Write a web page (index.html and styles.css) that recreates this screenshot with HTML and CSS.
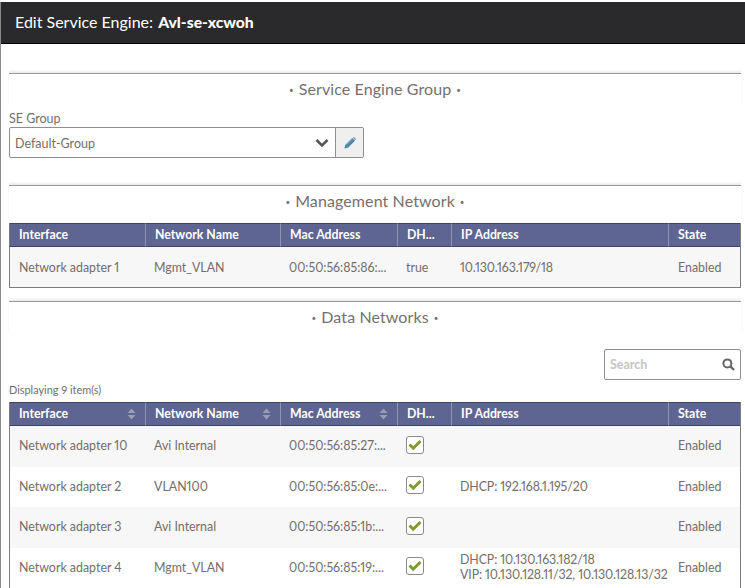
FILE: index.html
```html
<!DOCTYPE html>
<html lang="en">
<head>
    <meta charset="UTF-8">
    <title>Edit Service Engine</title>
    <link rel="stylesheet" href="styles.css">
</head>
<body>
<div class="modal">
    <div class="modal-head">Edit Service Engine: <b>Avl-se-xcwoh</b></div>

    <div class="modal-body">
        <div class="section-title first"><span class="dot">&bull;</span>Service Engine Group<span class="dot">&bull;</span></div>
        <label class="field-label">SE Group</label>
        <div class="select-row">
            <div class="select-box">
                <span>Default-Group</span>
                <svg class="chevron" width="14" height="10" viewBox="0 0 14 10"><path d="M1.5 2 7 7.5 12.5 2" fill="none" stroke="#5a5350" stroke-width="2.6"/></svg>
            </div>
            <div class="edit-btn">
                <svg width="12" height="12" viewBox="0 0 12 12"><path d="M0.5 11.5 1.2 8 8.2 1 11 3.8 4 10.8Z" fill="#4c86ad"/><path d="M9.4 0.4 11.6 2.6" stroke="#8a8f96" stroke-width="1.4"/><path d="M2.6 7.6 8.6 1.8" stroke="#8fb6d0" stroke-width="0.8"/></svg>
            </div>
        </div>

        <div class="section-title second"><span class="dot">&bull;</span>Management Network<span class="dot">&bull;</span></div>
        <table class="grid">
            <thead>
                <tr>
                    <th class="col-iface">Interface</th>
                    <th class="col-net">Network Name</th>
                    <th class="col-mac">Mac Address</th>
                    <th class="col-dh">DH...</th>
                    <th class="col-ip">IP Address</th>
                    <th class="col-state">State</th>
                </tr>
            </thead>
            <tbody>
                <tr class="odd single">
                    <td>Network adapter 1</td>
                    <td>Mgmt_VLAN</td>
                    <td>00:50:56:85:86:...</td>
                    <td>true</td>
                    <td class="ip-cell">10.130.163.179/18</td>
                    <td>Enabled</td>
                </tr>
            </tbody>
        </table>

        <div class="section-title third"><span class="dot">&bull;</span>Data Networks<span class="dot">&bull;</span></div>
        <div class="search-row">
            <div class="search-box">
                <span>Search</span>
                <svg width="13" height="13" viewBox="0 0 13 13"><circle cx="5.4" cy="5.4" r="4" fill="none" stroke="#666" stroke-width="2"/><path d="M8.4 8.4 12 12" stroke="#666" stroke-width="2.4"/></svg>
            </div>
        </div>
        <div class="count">Displaying 9 item(s)</div>
        <table class="grid open">
            <thead>
                <tr>
                    <th class="col-iface sortable">Interface<svg class="sort" width="9" height="12" viewBox="0 0 9 12"><path d="M4.5 0.5 8.5 5H0.5Z M4.5 11.5 8.5 7H0.5Z" fill="#9a9db5"/></svg></th>
                    <th class="col-net sortable">Network Name<svg class="sort" width="9" height="12" viewBox="0 0 9 12"><path d="M4.5 0.5 8.5 5H0.5Z M4.5 11.5 8.5 7H0.5Z" fill="#9a9db5"/></svg></th>
                    <th class="col-mac sortable">Mac Address<svg class="sort" width="9" height="12" viewBox="0 0 9 12"><path d="M4.5 0.5 8.5 5H0.5Z M4.5 11.5 8.5 7H0.5Z" fill="#9a9db5"/></svg></th>
                    <th class="col-dh">DH...</th>
                    <th class="col-ip">IP Address</th>
                    <th class="col-state">State</th>
                </tr>
            </thead>
            <tbody>
                <tr class="odd">
                    <td>Network adapter 10</td>
                    <td>Avi Internal</td>
                    <td>00:50:56:85:27:...</td>
                    <td><span class="check"><svg width="14" height="12" viewBox="0 0 14 12"><path d="M1.5 5.5 5.2 9.2 12.5 2" fill="none" stroke="#7f9a2e" stroke-width="3"/></svg></span></td>
                    <td class="ip-cell"></td>
                    <td>Enabled</td>
                </tr>
                <tr>
                    <td>Network adapter 2</td>
                    <td>VLAN100</td>
                    <td>00:50:56:85:0e:...</td>
                    <td><span class="check"><svg width="14" height="12" viewBox="0 0 14 12"><path d="M1.5 5.5 5.2 9.2 12.5 2" fill="none" stroke="#7f9a2e" stroke-width="3"/></svg></span></td>
                    <td class="ip-cell">DHCP: 192.168.1.195/20</td>
                    <td>Enabled</td>
                </tr>
                <tr class="odd">
                    <td>Network adapter 3</td>
                    <td>Avi Internal</td>
                    <td>00:50:56:85:1b:...</td>
                    <td><span class="check"><svg width="14" height="12" viewBox="0 0 14 12"><path d="M1.5 5.5 5.2 9.2 12.5 2" fill="none" stroke="#7f9a2e" stroke-width="3"/></svg></span></td>
                    <td class="ip-cell"></td>
                    <td>Enabled</td>
                </tr>
                <tr>
                    <td>Network adapter 4</td>
                    <td>Mgmt_VLAN</td>
                    <td>00:50:56:85:19:...</td>
                    <td><span class="check"><svg width="14" height="12" viewBox="0 0 14 12"><path d="M1.5 5.5 5.2 9.2 12.5 2" fill="none" stroke="#7f9a2e" stroke-width="3"/></svg></span></td>
                    <td class="ip-cell">DHCP: 10.130.163.182/18<br>VIP: 10.130.128.11/32, 10.130.128.13/32</td>
                    <td>Enabled</td>
                </tr>
            </tbody>
        </table>
    </div>
</div>
</body>
</html>
```

FILE: styles.css
```css
html, body {
    margin: 0;
    padding: 0;
    height: 588px;
    overflow: hidden;
    background-color: #fff;
}

body {
    font-family: Lato, "Open Sans", sans-serif;
    font-size: 12px;
    color: #736d6b;
    font-variant-numeric: proportional-nums;
}

.modal {
    height: 586px;
    margin-top: 2px;
    border-left: 1px solid #8a8a8a;
    overflow: hidden;
}

.modal-head {
    height: 41px;
    line-height: 40px;
    padding-left: 14px;
    background-color: #2a2a2d;
    border-bottom: 1px solid #000;
    color: #fff;
    font-size: 16px;
}

.modal-head b {
    margin-left: 1px;
    font-size: 15.7px;
    font-weight: 900;
}

.modal-body {
    padding: 0 4px 0 8px;
}

.section-title {
    height: 32px;
    line-height: 29px;
    border-top: 1px solid #999;
    box-shadow: 0 -2px 2px rgba(0, 0, 0, 0.08);
    text-align: center;
    font-size: 16px;
    letter-spacing: 0.1px;
    color: #75706e;
}

.dot {
    margin: 0 5px;
    font-size: 8px;
    vertical-align: middle;
}

.section-title.first {
    height: 31px;
    margin-top: 29px;
}

.section-title.second {
    margin-top: 27px;
    margin-bottom: 5px;
}

.section-title.third {
    margin-top: 13px;
}

.field-label {
    display: block;
    margin-top: 5px;
    height: 17px;
    line-height: 17px;
    font-size: 12.5px;
}

.select-row {
    display: flex;
    width: 355px;
    height: 31px;
    box-sizing: border-box;
    border: 1px solid #8f8f8f;
    border-radius: 2px;
}

.select-box {
    flex: 1;
    display: flex;
    align-items: center;
    justify-content: space-between;
    padding: 1px 6px 0 5px;
    font-size: 12.5px;
}

.edit-btn {
    width: 27px;
    display: flex;
    align-items: center;
    justify-content: center;
    background-color: #efefef;
    border-left: 1px solid #8f8f8f;
}

.grid {
    width: 732px;
    table-layout: fixed;
    border-collapse: separate;
    border-spacing: 0;
    border-left: 1px solid #7d7d7d;
    border-right: 1px solid #7d7d7d;
    border-bottom: 1px solid #7d7d7d;
}

.grid.open {
    border-bottom: none;
}

.grid th {
    position: relative;
    height: 24px;
    padding: 0 0 2px 9px;
    box-sizing: border-box;
    background-color: #5e6592;
    border-top: 1px solid #3d4268;
    border-bottom: 1px solid #3d4268;
    border-right: 1px solid #9094b3;
    color: #fff;
    font-size: 12.3px;
    font-weight: 700;
    text-align: left;
}

.grid th:last-child {
    border-right: none;
}

.col-iface { width: 136px; }
.col-net { width: 135px; }
.col-mac { width: 117px; }
.col-dh { width: 54px; }
.col-ip { width: 217px; }

.sort {
    position: absolute;
    right: 9px;
    top: 5px;
}

.grid td {
    height: 40.5px;
    padding: 0 0 1px 8px;
    box-sizing: border-box;
    font-size: 12.4px;
    line-height: 15px;
    white-space: nowrap;
    overflow: visible;
}

.grid td:first-child {
    padding-left: 9px;
}

.grid td:last-child {
    padding-left: 9px;
}

.grid td.ip-cell {
    letter-spacing: -0.1px;
}

.grid tr.odd td {
    background-color: #f7f7f7;
}

.grid tr.single td {
    height: 40px;
    padding-bottom: 0;
}

.search-row {
    display: flex;
    justify-content: flex-end;
    margin-top: 15px;
}

.search-box {
    width: 137px;
    height: 31px;
    box-sizing: border-box;
    display: flex;
    align-items: center;
    justify-content: space-between;
    padding: 0 5px 0 5px;
    border: 1px solid #8f8f8f;
    border-radius: 2px;
    color: #c4c4c4;
    font-size: 12.5px;
    font-weight: 700;
}

.count {
    height: 22px;
    line-height: 20px;
    font-size: 10.9px;
}

.check {
    display: inline-flex;
    align-items: center;
    justify-content: center;
    width: 18px;
    height: 18px;
    margin-bottom: 2px;
    box-sizing: border-box;
    border: 1px solid #8a8a8a;
    border-radius: 3px;
    background-color: #fff;
    vertical-align: middle;
}
```
